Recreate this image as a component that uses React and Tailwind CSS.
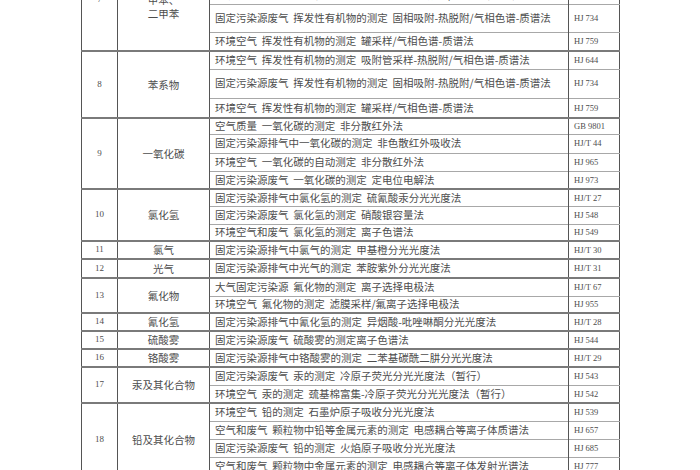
const H = {
  16: "h-[16px]",
  17: "h-[17px]",
  18: "h-[18px]",
  19: "h-[19px]",
  20: "h-[20px]",
  28: "h-[28px]",
  29: "h-[29px]",
};

const groups = [
  {
    no: "7",
    label: ["苯、", "甲苯、", "二甲苯"],
    rows: [
      ["环境空气 苯系物的测定 固体吸附/热脱附-气相色谱法", "HJ 583", 19],
      ["环境空气 苯系物的测定 活性炭吸附/二硫化碳解吸-气相色谱法", "HJ 584", 18],
      ["环境空气 挥发性有机物的测定 吸附管采样-热脱附/气相色谱-质谱法", "HJ 644", 18],
      ["固定污染源废气 挥发性有机物的测定 固相吸附-热脱附/气相色谱-质谱法", "HJ 734", 28],
      ["环境空气 挥发性有机物的测定 罐采样/气相色谱-质谱法", "HJ 759", 19],
    ],
  },
  {
    no: "8",
    label: ["苯系物"],
    rows: [
      ["环境空气 挥发性有机物的测定 吸附管采样-热脱附/气相色谱-质谱法", "HJ 644", 18],
      ["固定污染源废气 挥发性有机物的测定 固相吸附-热脱附/气相色谱-质谱法", "HJ 734", 29],
      ["环境空气 挥发性有机物的测定 罐采样/气相色谱-质谱法", "HJ 759", 20],
    ],
  },
  {
    no: "9",
    label: ["一氧化碳"],
    rows: [
      ["空气质量 一氧化碳的测定 非分散红外法", "GB 9801", 16],
      ["固定污染源排气中一氧化碳的测定 非色散红外吸收法", "HJ/T 44", 19],
      ["环境空气 一氧化碳的自动测定 非分散红外法", "HJ 965", 18],
      ["固定污染源废气 一氧化碳的测定 定电位电解法", "HJ 973", 18],
    ],
  },
  {
    no: "10",
    label: ["氯化氢"],
    rows: [
      ["固定污染源排气中氯化氢的测定 硫氰酸汞分光光度法", "HJ/T 27", 17],
      ["固定污染源废气 氯化氢的测定 硝酸银容量法", "HJ 548", 18],
      ["环境空气和废气 氯化氢的测定 离子色谱法", "HJ 549", 17],
    ],
  },
  {
    no: "11",
    label: ["氯气"],
    rows: [["固定污染源排气中氯气的测定 甲基橙分光光度法", "HJ/T 30", 18]],
  },
  {
    no: "12",
    label: ["光气"],
    rows: [["固定污染源排气中光气的测定 苯胺紫外分光光度法", "HJ/T 31", 19]],
  },
  {
    no: "13",
    label: ["氟化物"],
    rows: [
      ["大气固定污染源 氟化物的测定 离子选择电极法", "HJ/T 67", 18],
      ["环境空气 氟化物的测定 滤膜采样/氟离子选择电极法", "HJ 955", 17],
    ],
  },
  {
    no: "14",
    label: ["氰化氢"],
    rows: [["固定污染源排气中氰化氢的测定 异烟酸-吡唑啉酮分光光度法", "HJ/T 28", 18]],
  },
  {
    no: "15",
    label: ["硫酸雾"],
    rows: [["固定污染源废气 硫酸雾的测定离子色谱法", "HJ 544", 18]],
  },
  {
    no: "16",
    label: ["铬酸雾"],
    rows: [["固定污染源排气中铬酸雾的测定 二苯基碳酰二肼分光光度法", "HJ/T 29", 18]],
  },
  {
    no: "17",
    label: ["汞及其化合物"],
    rows: [
      ["固定污染源废气 汞的测定 冷原子荧光分光光度法（暂行）", "HJ 543", 18],
      ["环境空气 汞的测定 巯基棉富集-冷原子荧光分光光度法（暂行）", "HJ 542", 18],
    ],
  },
  {
    no: "18",
    label: ["铅及其化合物"],
    rows: [
      ["环境空气 铅的测定 石墨炉原子吸收分光光度法", "HJ 539", 18],
      ["空气和废气 颗粒物中铅等金属元素的测定 电感耦合等离子体质谱法", "HJ 657", 18],
      ["固定污染源废气 铅的测定 火焰原子吸收分光光度法", "HJ 685", 18],
      ["空气和废气 颗粒物中金属元素的测定 电感耦合等离子体发射光谱法", "HJ 777", 18],
    ],
  },
];

export default function App() {
  return (
    <div className="h-[470px] w-[700px] overflow-hidden bg-white">
      {/* the sheet is cut off at the top, so group 7 starts above the frame */}
      <table className="-mt-[52px] ml-[81px] w-[538px] table-fixed border-collapse border-x border-[#555] font-['Noto_Sans_CJK_SC',sans-serif] text-[#4d4d4d]">
        <colgroup>
          <col className="w-[36px]" />
          <col className="w-[92px]" />
          <col className="w-[359px]" />
          <col className="w-[51px]" />
        </colgroup>
        <tbody>
          {groups.map((group) =>
            group.rows.map(([method, code, height], rowIndex) => {
              const isFirst = rowIndex === 0;
              const rowLine = isFirst
                ? "border-t-2 border-t-[#7a7a7a]"
                : "border-t border-t-[#a8a8a8]";

              return (
                <tr key={`${group.no}-${code}-${rowIndex}`} className={H[height]}>
                  {isFirst && (
                    <>
                      <td
                        rowSpan={group.rows.length}
                        className="border-t-2 border-r border-t-[#7a7a7a] border-r-[#555] text-center align-middle font-['Liberation_Serif',serif] text-[9px]"
                      >
                        {group.no}
                      </td>
                      <td
                        rowSpan={group.rows.length}
                        className="border-t-2 border-r border-t-[#7a7a7a] border-r-[#555] text-center align-middle text-[10.5px] leading-[14px]"
                      >
                        {group.label.map((line) => (
                          <div key={line}>{line}</div>
                        ))}
                      </td>
                    </>
                  )}

                  <td
                    className={`${rowLine} border-r border-r-[#555] whitespace-pre pl-[5px] align-middle text-[10.5px] leading-none`}
                  >
                    {method.replaceAll(" ", "  ")}
                  </td>
                  <td
                    className={`${rowLine} whitespace-nowrap pl-[5px] align-middle font-['Liberation_Serif',serif] text-[8.5px] leading-none`}
                  >
                    {code}
                  </td>
                </tr>
              );
            })
          )}
        </tbody>
      </table>
    </div>
  );
}
